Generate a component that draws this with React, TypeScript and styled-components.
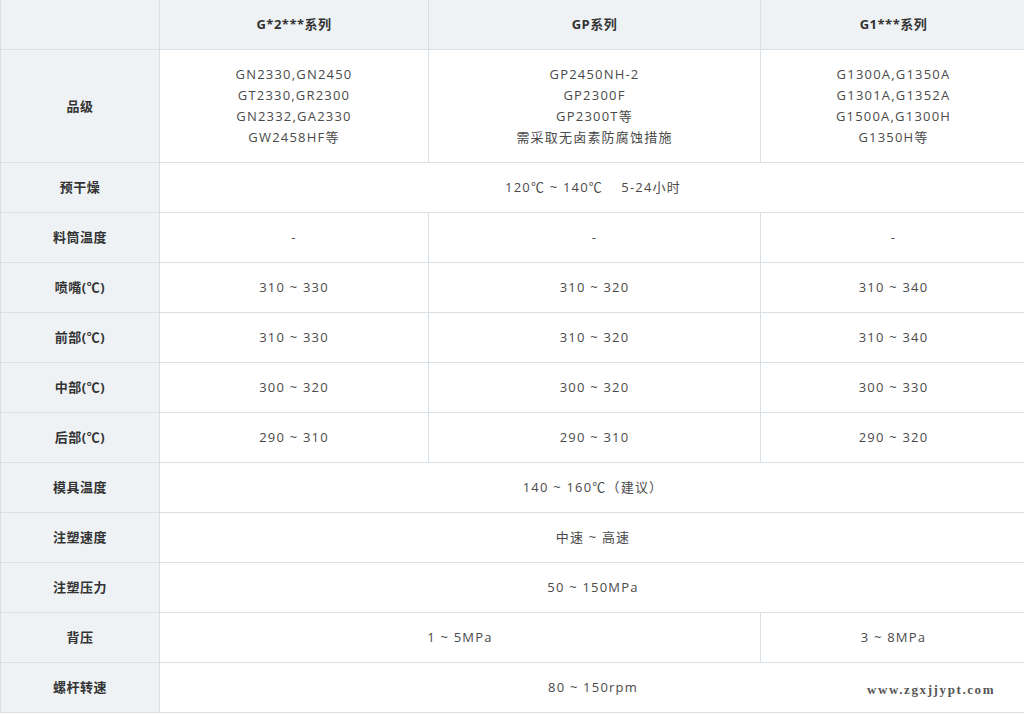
import React from 'react'
import styled, { createGlobalStyle } from 'styled-components'

const GlobalStyle = createGlobalStyle`
  html, body {
    margin: 0;
    padding: 0;
    background: #fff;
  }
  body {
    font-family: "Open Sans", "Noto Sans CJK SC", sans-serif;
    color: #444;
  }
`

const Wrap = styled.div`
  position: relative;
  width: 1024px;
  height: 714px;
  overflow: hidden;
`

const Table = styled.table`
  border-collapse: collapse;
  table-layout: fixed;
  width: 1026px;
  margin-top: -1px;
`

const Cell = styled.td<{ $head?: boolean; $h?: number }>`
  border: 1px solid #d8dfe5;
  background: ${({ $head }) => ($head ? '#eef2f5' : '#fff')};
  color: ${({ $head }) => ($head ? '#333' : '#4a4a4a')};
  font-weight: ${({ $head }) => ($head ? 700 : 400)};
  font-size: 13px;
  letter-spacing: ${({ $head }) => ($head ? '0.5px' : '1.2px')};
  line-height: 21px;
  text-align: center;
  vertical-align: middle;
  padding: 0;
  height: ${({ $h }) => ($h ?? 50) - 1}px;
`

const Mark = styled.div`
  position: absolute;
  left: 867px;
  top: 682px;
  font-family: "Liberation Serif", "DejaVu Serif", serif;
  font-size: 13px;
  font-weight: 700;
  color: #555;
  letter-spacing: 1.6px;
`

type Row = { label: string; cells: { text: string; span?: number }[] }

const rows: Row[] = [
  { label: '预干燥', cells: [{ text: '120℃ ~ 140℃\u00a0\u00a0\u00a0\u00a05-24小时', span: 3 }] },
  { label: '料筒温度', cells: [{ text: '-' }, { text: '-' }, { text: '-' }] },
  { label: '喷嘴(℃)', cells: [{ text: '310 ~ 330' }, { text: '310 ~ 320' }, { text: '310 ~ 340' }] },
  { label: '前部(℃)', cells: [{ text: '310 ~ 330' }, { text: '310 ~ 320' }, { text: '310 ~ 340' }] },
  { label: '中部(℃)', cells: [{ text: '300 ~ 320' }, { text: '300 ~ 320' }, { text: '300 ~ 330' }] },
  { label: '后部(℃)', cells: [{ text: '290 ~ 310' }, { text: '290 ~ 310' }, { text: '290 ~ 320' }] },
  { label: '模具温度', cells: [{ text: '140 ~ 160℃（建议）', span: 3 }] },
  { label: '注塑速度', cells: [{ text: '中速 ~ 高速', span: 3 }] },
  { label: '注塑压力', cells: [{ text: '50 ~ 150MPa', span: 3 }] },
  { label: '背压', cells: [{ text: '1 ~ 5MPa', span: 2 }, { text: '3 ~ 8MPa' }] },
  { label: '螺杆转速', cells: [{ text: '80 ~ 150rpm', span: 3 }] },
]

const grades = [
  ['GN2330,GN2450', 'GT2330,GR2300', 'GN2332,GA2330', 'GW2458HF等'],
  ['GP2450NH-2', 'GP2300F', 'GP2300T等', '需采取无卤素防腐蚀措施'],
  ['G1300A,G1350A', 'G1301A,G1352A', 'G1500A,G1300H', 'G1350H等'],
]

const App = () => (
  <>
    <GlobalStyle />
    <Wrap>
      <Table>
        <colgroup>
          <col style={{ width: 159 }} />
          <col style={{ width: 269 }} />
          <col style={{ width: 332 }} />
          <col style={{ width: 266 }} />
        </colgroup>
        <tbody>
          <tr>
            <Cell $head $h={50} />
            <Cell $head $h={50}>G*2***系列</Cell>
            <Cell $head $h={50}>GP系列</Cell>
            <Cell $head $h={50}>G1***系列</Cell>
          </tr>
          <tr>
            <Cell $head $h={113}>品级</Cell>
            {grades.map((g, i) => (
              <Cell key={i} $h={113}>
                {g.map((line) => (
                  <div key={line}>{line}</div>
                ))}
              </Cell>
            ))}
          </tr>
          {rows.map((r) => (
            <tr key={r.label}>
              <Cell $head>{r.label}</Cell>
              {r.cells.map((c, i) => (
                <Cell key={i} colSpan={c.span}>
                  {c.text}
                </Cell>
              ))}
            </tr>
          ))}
        </tbody>
      </Table>
      <Mark>www.zgxjjypt.com</Mark>
    </Wrap>
  </>
)

export default App
